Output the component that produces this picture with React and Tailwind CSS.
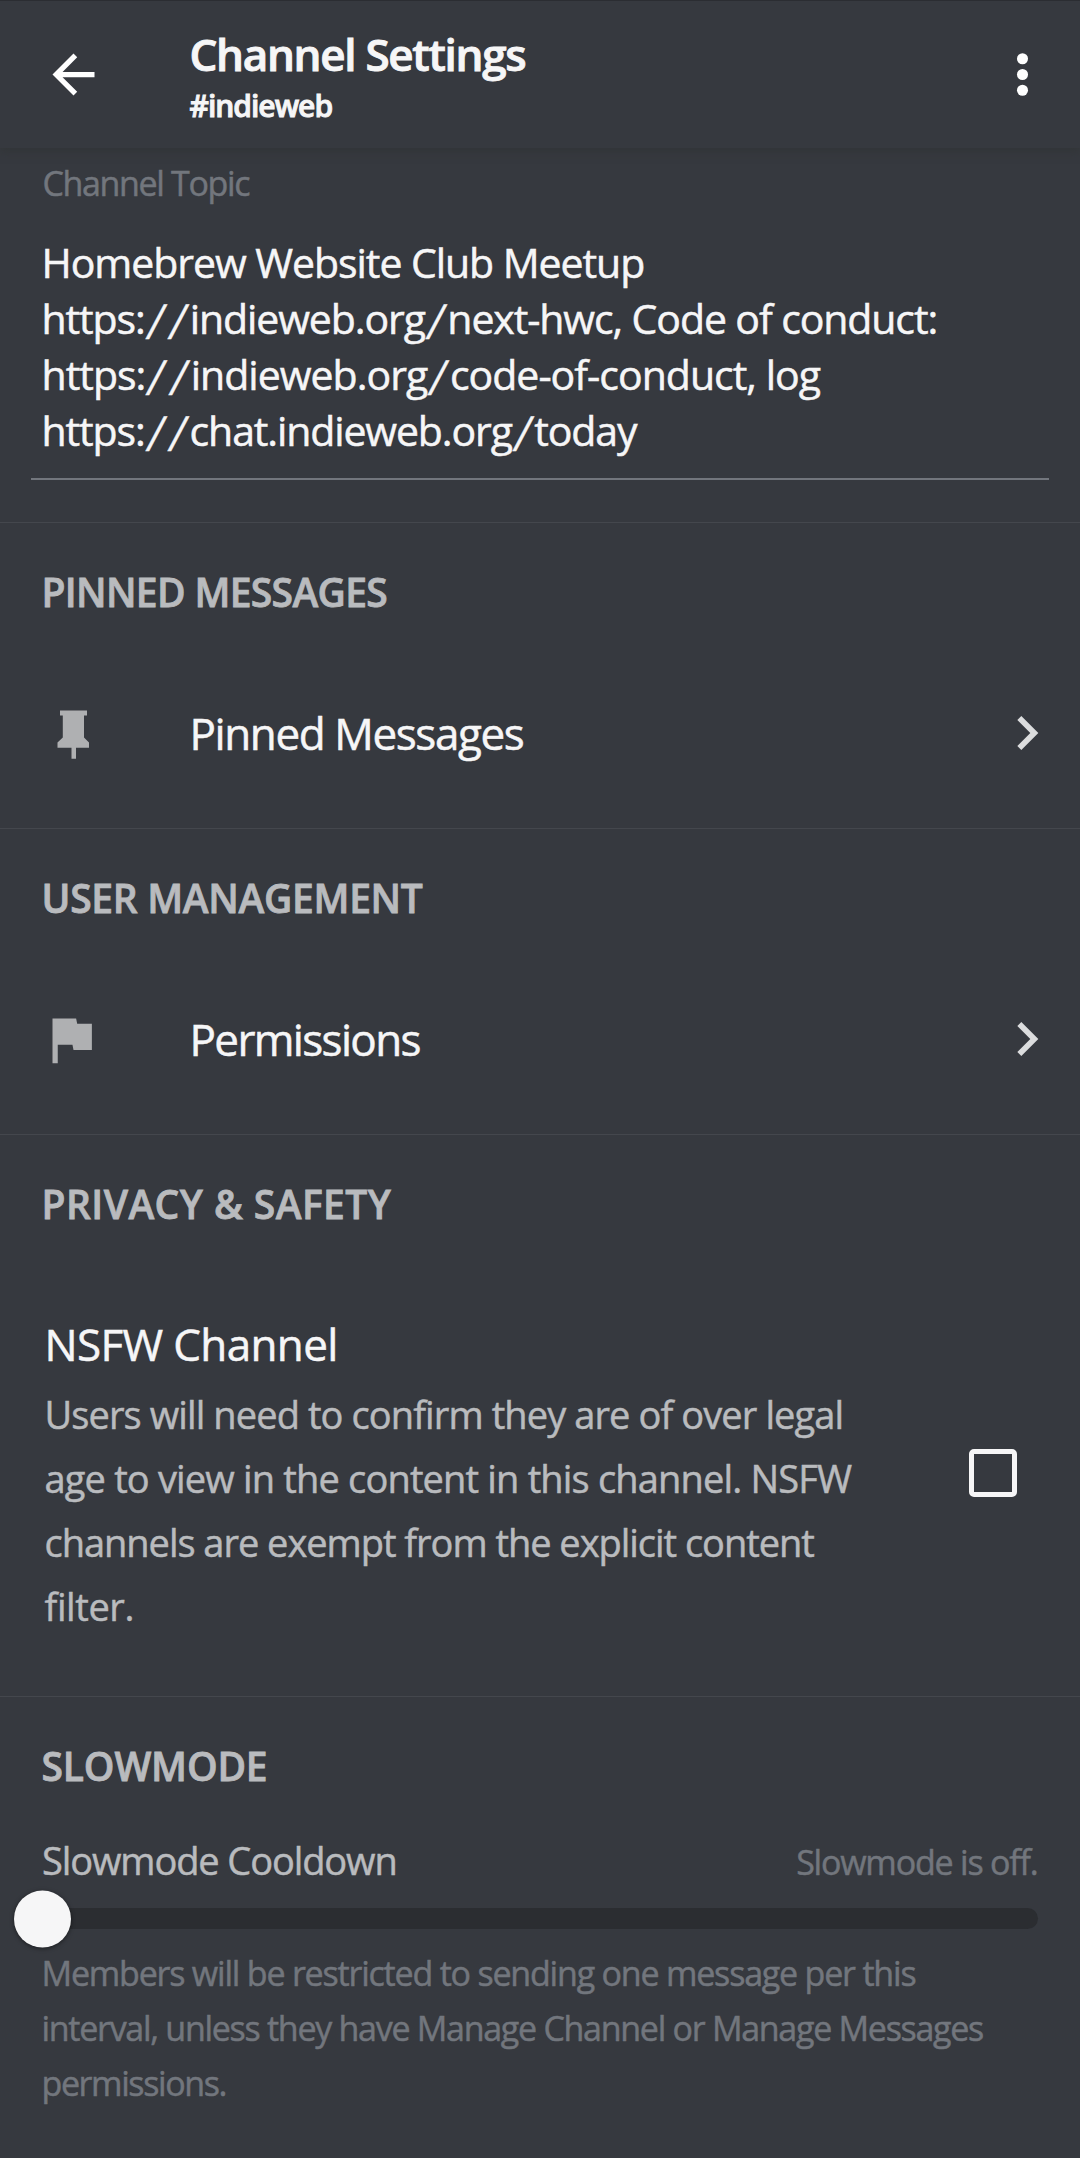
import React, { useState } from 'react';

// Icons
function BackIcon() {
  return (
    <svg width="63" height="63" viewBox="0 0 24 24" fill="#ffffff">
      <path d="M20 11H7.83l5.59-5.59L12 4l-8 8 8 8 1.41-1.41L7.83 13H20v-2z" />
    </svg>
  );
}

function MoreIcon() {
  return (
    <svg width="63" height="63" viewBox="0 0 24 24" fill="#ffffff">
      <circle cx="12" cy="6" r="2.1" />
      <circle cx="12" cy="12" r="2.1" />
      <circle cx="12" cy="18" r="2.1" />
    </svg>
  );
}

function PinIcon() {
  return (
    <svg width="63" height="63" viewBox="0 0 63 63" fill="#afb0b2">
      <path d="M18 8.5h27v5h-3V35.5l5 5v5.2H34v11h-4.5v-11H15.5v-5.2l5.3-5V13.5H18z" />
    </svg>
  );
}

function FlagIcon() {
  return (
    <svg width="63" height="63" viewBox="1 0 24 24" fill="#afb0b2">
      <path d="M14.4 6L14 4H5v17h2v-7h5.6l.4 2h7V6z" />
    </svg>
  );
}

function ChevronIcon() {
  return (
    <svg width="68" height="68" viewBox="0 0 24 24" fill="#dcddde">
      <path d="M10 6L8.59 7.41 13.17 12l-4.58 4.59L10 18l6-6z" />
    </svg>
  );
}

function Section({ title, tracking, children }) {
  return (
    <section className="border-t border-[#44474d] pt-[45px]">
      <h2 className={`pl-[41.5px] text-[39px] leading-[48px] font-semibold text-[#b9bbbe] [-webkit-text-stroke:0.8px] ${tracking}`}>{title}</h2>
      {children}
    </section>
  );
}

function LinkRow({ icon, label, tracking }) {
  return (
    <button className="mt-[45px] mb-[23px] flex h-36 w-full items-center pl-[42px] pr-[19px] text-left">
      {icon}
      <span className={`ml-[84.5px] flex-1 text-[44px] leading-[56px] ${tracking}`}>{label}</span>
      <ChevronIcon />
    </button>
  );
}

// Url slash, wider and more slanted than the font's own
function Slash() {
  return <span className="inline-block px-[4.3px] [transform:translateY(2px)_skewX(-12deg)_scaleY(1.18)]">/</span>;
}

export default function App() {
  const [nsfw, setNsfw] = useState(false);

  return (
    <div className="flex min-h-[2158px] w-[1080px] flex-col bg-[#36393f] font-['Open_Sans',sans-serif] whitespace-nowrap text-[#f6f6f7] [-webkit-text-stroke:0.5px]">
      <header className="flex h-[148px] items-center border-t border-[#2b2d32] pl-[42px] pr-[26px] shadow-[0_4px_8px_rgba(50,53,55,0.9)]">
        <BackIcon />
        <div className="mt-[3px] ml-[84.5px] flex-1 font-semibold [-webkit-text-stroke:0.9px]">
          <h1 className="text-[44px] leading-[50px] tracking-[-1.3px]">Channel Settings</h1>
          <p className="mt-2.5 text-[30px] leading-[34px] tracking-[-1px]">#indieweb</p>
        </div>
        <MoreIcon />
      </header>

      {/* Channel topic */}
      <div className="px-[31px] pt-[15px] pb-[42px]">
        <div className="border-b-2 border-[#72767d] pl-[10.5px] pb-5">
          <div className="pl-px text-[34px] leading-10 tracking-[-1.35px] text-[#72767d]">Channel Topic</div>
          <p className="mt-[31px] text-[41px] leading-[56px]">
            <span className="block tracking-[-1.05px]">Homebrew Website Club Meetup</span>
            <span className="block tracking-[-1.1px]">https:<Slash /><Slash />indieweb.org<Slash />next-hwc, Code of conduct:</span>
            <span className="block tracking-[-0.98px]">https:<Slash /><Slash />indieweb.org<Slash />code-of-conduct, log</span>
            <span className="block tracking-[-1.12px]">https:<Slash /><Slash />chat.indieweb.org<Slash />today</span>
          </p>
        </div>
      </div>

      <Section title="PINNED MESSAGES" tracking="tracking-[-0.65px]">
        <LinkRow icon={<PinIcon />} label="Pinned Messages" tracking="tracking-[-1.4px]" />
      </Section>

      <Section title="USER MANAGEMENT" tracking="tracking-[-0.3px]">
        <LinkRow icon={<FlagIcon />} label="Permissions" tracking="tracking-[-1.65px]" />
      </Section>

      <Section title="PRIVACY & SAFETY" tracking="tracking-[0.45px]">
        <div className="mt-[88px] flex items-center justify-between pb-[58px] pl-[44.5px] pr-[63px]">
          <div>
            <h3 className="text-[44px] leading-[56px] tracking-[-0.65px]">NSFW Channel</h3>
            <p className="mt-2.5 text-[38px] leading-[64px] text-[#b9bbbe]">
              <span className="block tracking-[-0.9px]">Users will need to confirm they are of over legal</span>
              <span className="block tracking-[-0.83px]">age to view in the content in this channel. NSFW</span>
              <span className="block tracking-[-1.03px]">channels are exempt from the explicit content</span>
              <span className="block tracking-[-0.4px]">filter.</span>
            </p>
          </div>
          <button
            role="checkbox"
            aria-checked={nsfw}
            onClick={() => setNsfw(!nsfw)}
            className="-mt-2 size-12 rounded-[5px] border-5 border-[#f6f6f7]"
          />
        </div>
      </Section>

      <Section title="SLOWMODE" tracking="tracking-[-0.15px]">
        <div className="mt-[46px] flex items-baseline justify-between pl-[42px] pr-[42.5px]">
          <span className="text-[38px] leading-[48px] tracking-[-1.1px] text-[#b9bbbe]">Slowmode Cooldown</span>
          <span className="text-[34px] leading-10 tracking-[-1.2px] text-[#72767d]">Slowmode is off.</span>
        </div>
        <div className="relative mx-[42px] mt-6 h-[21px] rounded-full bg-[#2b2d31]">
          <div className="absolute -left-7 top-1/2 size-[57px] -translate-y-1/2 rounded-full bg-[#f6f6f7] shadow-[0_1px_4px_rgba(0,0,0,0.5)]" />
        </div>
        <p className="mt-[17px] pl-[41.5px] text-[34px] leading-[55px] text-[#72767d]">
          <span className="block tracking-[-1.2px]">Members will be restricted to sending one message per this</span>
          <span className="block tracking-[-1.28px]">interval, unless they have Manage Channel or Manage Messages</span>
          <span className="block tracking-[-1.4px]">permissions.</span>
        </p>
      </Section>
    </div>
  );
}
